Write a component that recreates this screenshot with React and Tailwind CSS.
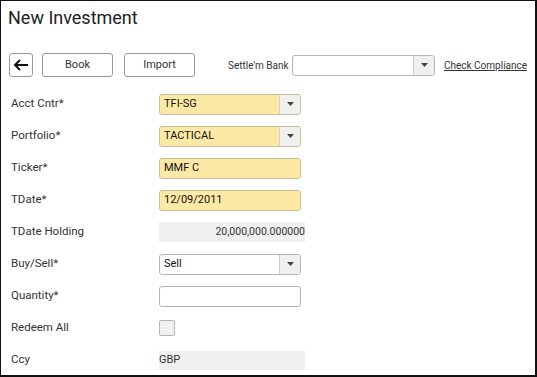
import React from "react";

const font = { fontFamily: "Roboto, 'Liberation Sans', sans-serif" };

function Caret() {
  return (
    <svg width="7" height="4" viewBox="0 0 7 4">
      <path d="M0 0 L7 0 L3.5 4 Z" fill="#444" />
    </svg>
  );
}

function Select({ value, yellow }) {
  return (
    <div
      className={`flex h-[21px] w-[142px] shrink-0 rounded-[3px] border ${
        yellow ? "border-[#c9bd97] bg-[#fde9a6]" : "border-[#b5b5b5] bg-white"
      }`}
    >
      <div className="flex flex-1 items-center whitespace-nowrap pl-[4px] text-[11px] text-[#111]">
        {value}
      </div>
      <div className="flex w-[21px] items-center justify-center rounded-r-[3px] border-l border-[#cfcfcf] bg-[#f0f0f0]">
        <Caret />
      </div>
    </div>
  );
}

function Input({ value, yellow }) {
  return (
    <div
      className={`flex h-[21px] w-[142px] shrink-0 items-center whitespace-nowrap rounded-[3px] border pl-[4px] text-[11px] text-[#111] ${
        yellow ? "border-[#c9bd97] bg-[#fde9a6]" : "border-[#b5b5b5] bg-white"
      }`}
    >
      {value}
    </div>
  );
}

function Row({ label, children }) {
  return (
    <div className="flex h-[32px] items-center">
      <div className="w-[148px] shrink-0 whitespace-nowrap text-[11.5px] text-[#333]">{label}</div>
      {children}
    </div>
  );
}

export default function App() {
  return (
    <div
      style={font}
      className="box-border h-[377px] w-[537px] overflow-hidden border-t border-l border-r-2 border-b-2 border-[#111] bg-white pl-[10px]"
    >
      <div className="h-[52px] pt-[6px]">
        <div className="-ml-[3px] text-[18px] leading-[22px] text-[#222]">New Investment</div>
      </div>
      <div className="flex h-[24px] items-center whitespace-nowrap">
        <div className="-ml-[2px] flex h-[24px] w-[24px] shrink-0 items-center justify-center rounded-[3px] border border-[#9a9a9a] bg-white">
          <svg width="16" height="12" viewBox="0 0 16 12">
            <path d="M15 6 H2 M7 1 L2 6 L7 11" fill="none" stroke="#111" strokeWidth="2" />
          </svg>
        </div>
        <div className="ml-[9px] flex h-[24px] w-[71px] shrink-0 items-center justify-center rounded-[3px] border border-[#9a9a9a] text-[11px] text-[#333]">
          Book
        </div>
        <div className="ml-[11px] flex h-[24px] w-[71px] shrink-0 items-center justify-center rounded-[3px] border border-[#9a9a9a] text-[11px] text-[#333]">
          Import
        </div>
        <div className="ml-[33px] w-[59px] shrink-0 text-[10px] text-[#333]">Settle'm Bank</div>
        <div className="ml-[5px] flex h-[21px] w-[143px] shrink-0 rounded-[3px] border border-[#b5b5b5] bg-white">
          <div className="flex-1" />
          <div className="flex w-[21px] items-center justify-center rounded-r-[3px] border-l border-[#cfcfcf] bg-[#f0f0f0]">
            <Caret />
          </div>
        </div>
        <div className="ml-[9px] shrink-0 text-[10px] text-[#333] underline">Check Compliance</div>
      </div>
      <div className="mt-[11px]">
        <Row label="Acct Cntr*">
          <Select value="TFI-SG" yellow />
        </Row>
        <Row label="Portfolio*">
          <Select value="TACTICAL" yellow />
        </Row>
        <Row label="Ticker*">
          <Input value="MMF C" yellow />
        </Row>
        <Row label="TDate*">
          <Input value="12/09/2011" yellow />
        </Row>
        <Row label="TDate Holding">
          <div className="flex h-[20px] w-[146px] shrink-0 items-center justify-end bg-[#f0f0f0] text-[10.5px] text-[#333]">
            20,000,000.000000
          </div>
        </Row>
        <Row label="Buy/Sell*">
          <Select value="Sell" />
        </Row>
        <Row label="Quantity*">
          <Input value="" />
        </Row>
        <Row label="Redeem All">
          <div className="h-[16px] w-[16px] shrink-0 rounded-[2px] border border-[#b5b5b5] bg-[#f0f0f0]" />
        </Row>
        <Row label="Ccy">
          <div className="flex h-[19px] w-[146px] shrink-0 items-center bg-[#f0f0f0] text-[11px] text-[#333]">
            GBP
          </div>
        </Row>
      </div>
    </div>
  );
}
